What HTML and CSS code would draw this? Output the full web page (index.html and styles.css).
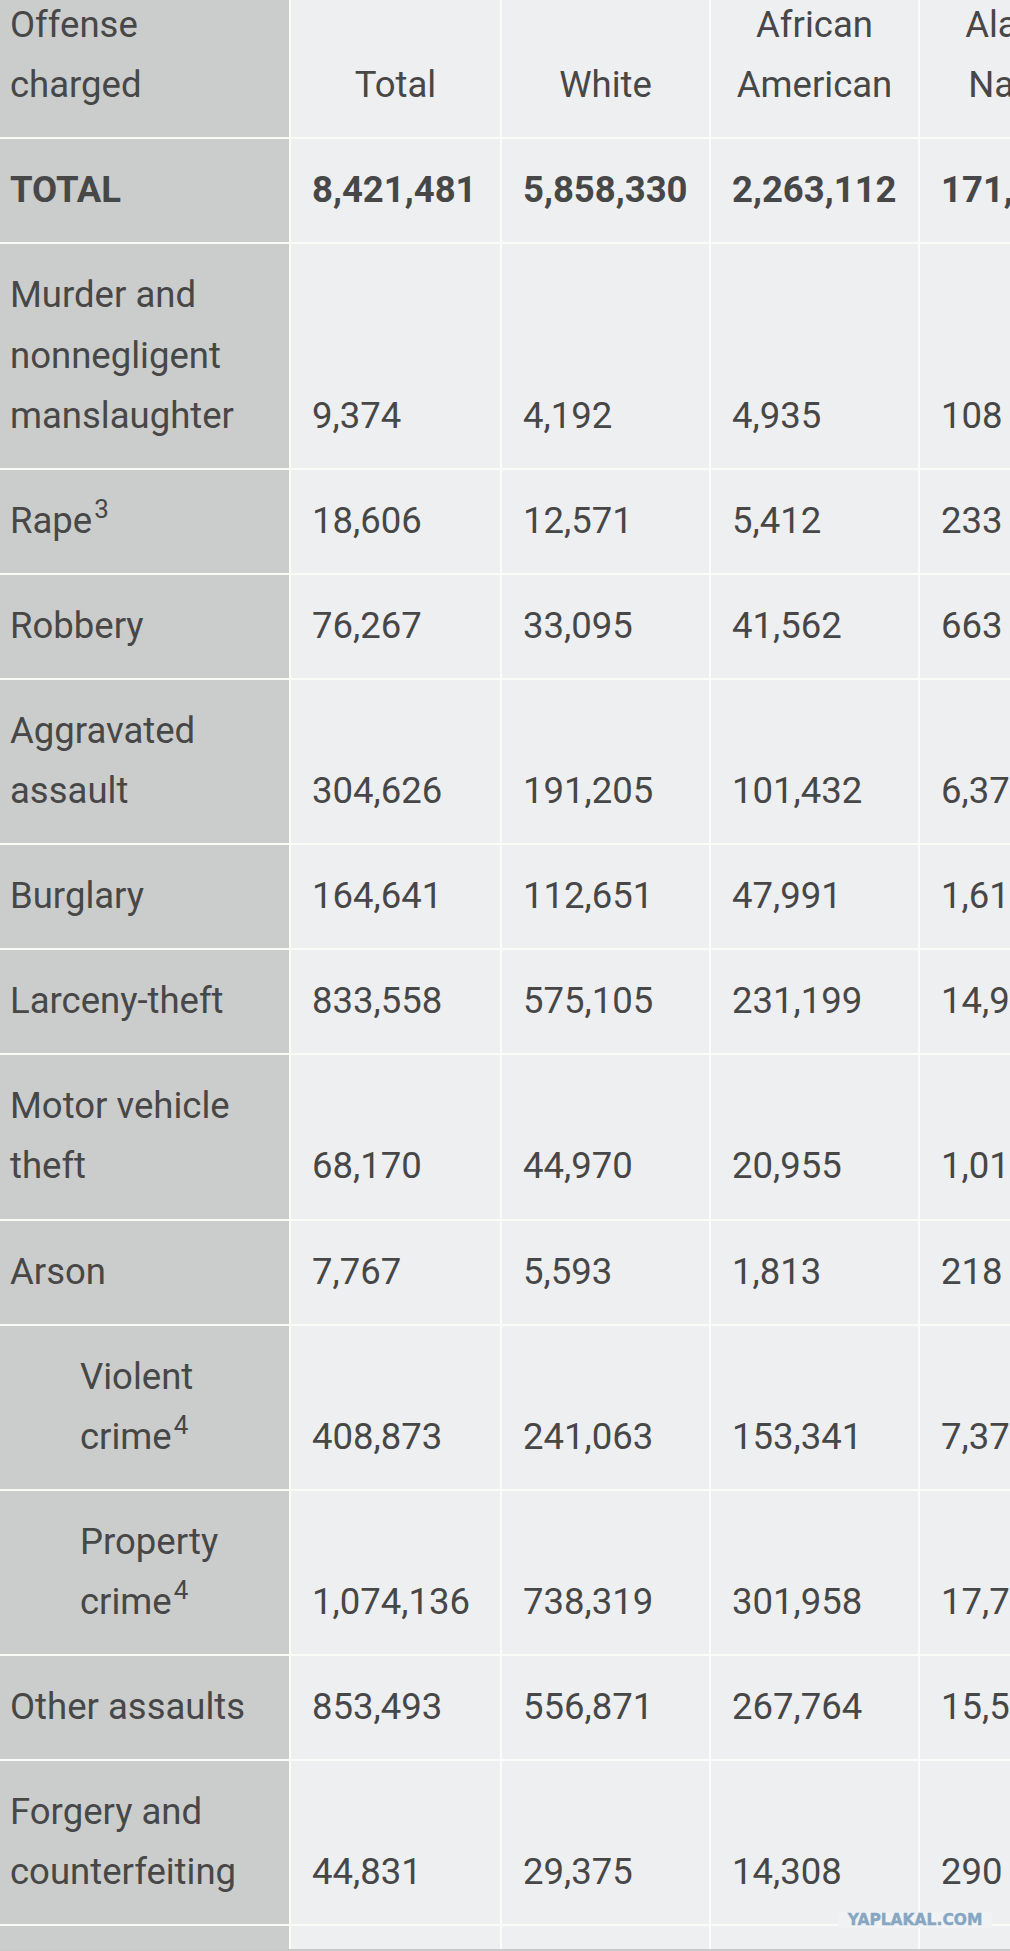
FILE: index.html
```html
<!DOCTYPE html>
<html lang="en">
<head>
<meta charset="utf-8">
<title>Arrests by race</title>
<link rel="stylesheet" href="styles.css">
</head>
<body>
<div class="viewport">
  <table class="arrests">
    <colgroup>
      <col class="c-offense">
      <col class="c-total">
      <col class="c-white">
      <col class="c-black">
      <col class="c-native">
    </colgroup>
    <thead>
      <tr>
        <th class="offense">Offense charged</th>
        <th>Total</th>
        <th>White</th>
        <th>African American</th>
        <th>American Indian or Alaska Native</th>
      </tr>
    </thead>
    <tbody>
      <tr class="grand">
        <th class="offense">TOTAL</th>
        <td>8,421,481</td><td>5,858,330</td><td>2,263,112</td><td>171,185</td>
      </tr>
      <tr>
        <th class="offense">Murder and nonnegligent manslaughter</th>
        <td>9,374</td><td>4,192</td><td>4,935</td><td>108</td>
      </tr>
      <tr>
        <th class="offense">Rape<sup>3</sup></th>
        <td>18,606</td><td>12,571</td><td>5,412</td><td>233</td>
      </tr>
      <tr>
        <th class="offense">Robbery</th>
        <td>76,267</td><td>33,095</td><td>41,562</td><td>663</td>
      </tr>
      <tr>
        <th class="offense">Aggravated assault</th>
        <td>304,626</td><td>191,205</td><td>101,432</td><td>6,374</td>
      </tr>
      <tr>
        <th class="offense">Burglary</th>
        <td>164,641</td><td>112,651</td><td>47,991</td><td>1,615</td>
      </tr>
      <tr>
        <th class="offense">Larceny-theft</th>
        <td>833,558</td><td>575,105</td><td>231,199</td><td>14,953</td>
      </tr>
      <tr>
        <th class="offense">Motor vehicle theft</th>
        <td>68,170</td><td>44,970</td><td>20,955</td><td>1,013</td>
      </tr>
      <tr>
        <th class="offense">Arson</th>
        <td>7,767</td><td>5,593</td><td>1,813</td><td>218</td>
      </tr>
      <tr>
        <th class="offense sub">Violent crime<sup>4</sup></th>
        <td>408,873</td><td>241,063</td><td>153,341</td><td>7,378</td>
      </tr>
      <tr>
        <th class="offense sub">Property crime<sup>4</sup></th>
        <td>1,074,136</td><td>738,319</td><td>301,958</td><td>17,799</td>
      </tr>
      <tr>
        <th class="offense">Other assaults</th>
        <td>853,493</td><td>556,871</td><td>267,764</td><td>15,521</td>
      </tr>
      <tr>
        <th class="offense">Forgery and counterfeiting</th>
        <td>44,831</td><td>29,375</td><td>14,308</td><td>290</td>
      </tr>
      <tr>
        <th class="offense">Fraud</th>
        <td>104,520</td><td>69,398</td><td>32,941</td><td>1,652</td>
      </tr>
    </tbody>
  </table>
  <div class="watermark">YAPLAKAL.COM</div>
</div>
</body>
</html>
```

FILE: styles.css
```css
html, body {
  margin: 0;
  padding: 0;
  background: #ffffff;
  overflow: hidden;
}

.viewport {
  position: relative;
  width: 1010px;
  height: 1951px;
  overflow: hidden;
  box-sizing: border-box;
  border-bottom: 2px solid #c9c9c9;
  background: #ffffff;
}

.arrests {
  table-layout: fixed;
  width: 1124px;
  margin: -148px 0 0 -2px;
  border-collapse: separate;
  border-spacing: 2px;
  background: #fbfbf8;
  font-family: Roboto, "Liberation Sans", Arial, sans-serif;
  font-size: 36.5px;
  line-height: 60.1px;
  color: #474747;
}

.c-offense { width: 289px; }
.c-total { width: 209px; }
.c-white { width: 207px; }
.c-black { width: 207px; }
.c-native { width: 200px; }

.arrests th,
.arrests td {
  box-sizing: border-box;
  vertical-align: bottom;
  padding: 21px 10px 22px 21px;
  background: #eeeff1;
  font-weight: 400;
  text-align: left;
}

.arrests thead th {
  text-align: center;
  padding-left: 10px;
  padding-right: 10px;
}

.arrests th.offense {
  background: #cbcdcc;
  text-align: left;
  padding-left: 10px;
  padding-right: 21px;
}

.arrests th.sub {
  padding-left: 80px;
}

.grand th,
.grand td {
  font-weight: 700;
}

.arrests sup {
  font-size: 26px;
  line-height: 0;
  vertical-align: 15px;
  margin-left: 2px;
}

.watermark {
  position: absolute;
  left: 838px;
  top: 1912px;
  width: 154px;
  height: 16px;
  background: #f1f2f4;
  color: #86a6c2;
  font-family: "DejaVu Sans", sans-serif;
  font-weight: 700;
  font-size: 15.5px;
  line-height: 16px;
  text-align: center;
  -webkit-text-stroke: 0.4px #86a6c2;
}
```
